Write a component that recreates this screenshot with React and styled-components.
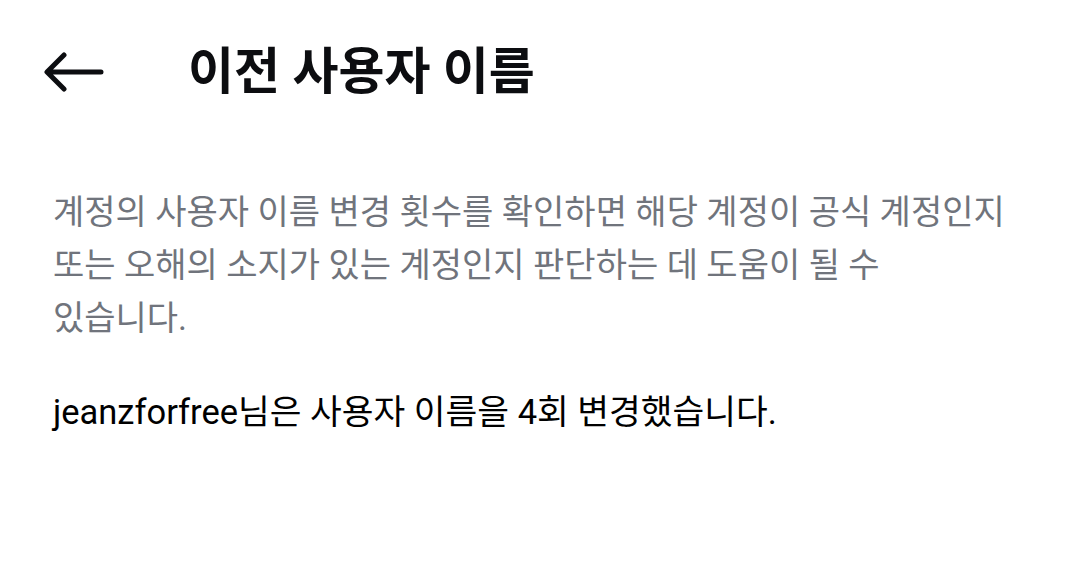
import React from "react";
import styled, { createGlobalStyle } from "styled-components";

const Global = createGlobalStyle`
  html, body { margin: 0; padding: 0; background: #ffffff; }
  body { font-family: Roboto, "Noto Sans CJK KR", sans-serif; }
`;

const Page = styled.div`
  width: 1080px;
  height: 571px;
  background: #ffffff;
  overflow: hidden;
`;

const Header = styled.header`
  display: flex;
  align-items: center;
  height: 144px;
  padding-left: 44px;
  box-sizing: border-box;
`;

const BackButton = styled.button`
  display: flex;
  align-items: center;
  justify-content: center;
  width: 60px;
  height: 60px;
  padding: 0;
  border: 0;
  background: none;
  margin-right: 84px;
  cursor: pointer;
`;

const Title = styled.h1`
  margin: 0;
  font-family: Roboto, "Noto Sans CJK KR", sans-serif;
  font-weight: 700;
  font-size: 50px;
  line-height: 60px;
  color: #0c0d10;
`;

const Body = styled.main`
  padding: 42px 53px 0;
`;

const Description = styled.p`
  margin: 0;
  font-size: 34px;
  line-height: 53px;
  color: #70747c;
`;

const Summary = styled.p`
  margin: 41px 0 0;
  font-size: 34.5px;
  font-weight: 400;
  line-height: 53px;
  color: #000000;
`;

const ArrowIcon = () => (
  <svg width="60" height="40" viewBox="0 0 60 40" fill="none">
    <path
      d="M57 20H4M20 3L3 20L20 37"
      stroke="#0c0d10"
      strokeWidth="5"
      strokeLinecap="round"
      strokeLinejoin="round"
    />
  </svg>
);

export default function App() {
  return (
    <Page>
      <Global />
      <Header>
        <BackButton aria-label="뒤로">
          <ArrowIcon />
        </BackButton>
        <Title>이전 사용자 이름</Title>
      </Header>
      <Body>
        <Description>
          계정의 사용자 이름 변경 횟수를 확인하면 해당 계정이 공식 계정인지
          <br />
          또는 오해의 소지가 있는 계정인지 판단하는 데 도움이 될 수
          <br />
          있습니다.
        </Description>
        <Summary>jeanzforfree님은 사용자 이름을 4회 변경했습니다.</Summary>
      </Body>
    </Page>
  );
}
